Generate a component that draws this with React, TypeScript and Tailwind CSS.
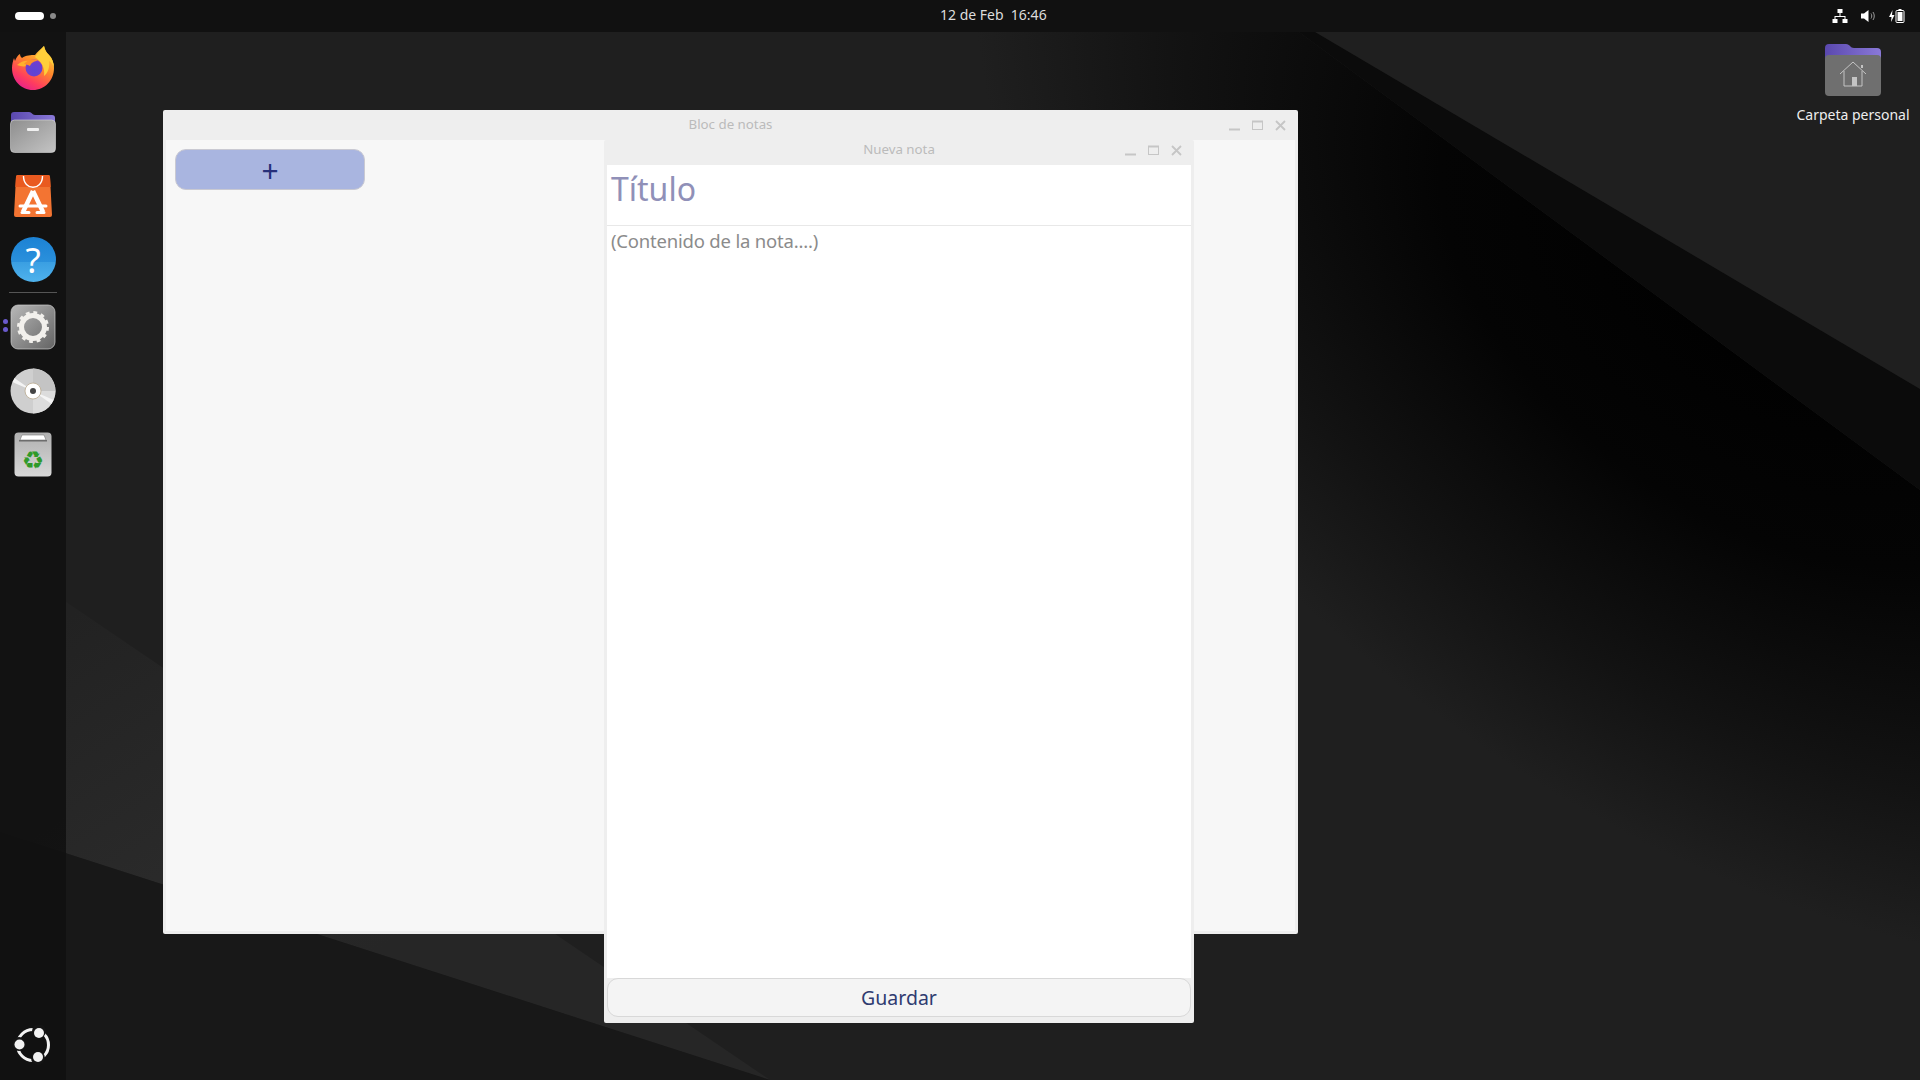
import type { ReactNode } from "react";

const uiFont = "font-['Noto_Sans',sans-serif]";

const Wallpaper = () => (
  <svg className="absolute inset-0" width="1920" height="1080" viewBox="0 0 1920 1080">
    <defs>
      <radialGradient
        id="wedge"
        gradientUnits="userSpaceOnUse"
        cx="0"
        cy="0"
        r="1"
        gradientTransform="translate(1750 300) rotate(36) scale(880 520)"
      >
        <stop offset="0" stopColor="#000" />
        <stop offset="0.4" stopColor="#040404" />
        <stop offset="0.75" stopColor="#131313" />
        <stop offset="1" stopColor="#1f1f1f" />
      </radialGradient>
      <linearGradient id="facet" gradientUnits="userSpaceOnUse" x1="60" y1="620" x2="300" y2="1000">
        <stop offset="0" stopColor="#222222" />
        <stop offset="0.6" stopColor="#2a2a2a" />
        <stop offset="1" stopColor="#262626" />
      </linearGradient>
    </defs>
    <rect width="1920" height="1080" fill="#1f1f1f" />
    <polygon points="1299,32 1920,490 1920,1080 0,1080 0,32" fill="url(#wedge)" />
    <polygon points="1315,32 1920,389 1920,490 1299,32" fill="#0b0b0b" />
    <polygon points="0,557 770,1080 0,832" fill="url(#facet)" />
    <polygon points="0,832 770,1080 0,1080" fill="#181818" />
  </svg>
);

const Firefox = () => (
  <svg width="44" height="46" viewBox="0 0 44 46">
    <defs>
      <linearGradient id="ffBody" x1="0.8" y1="0.05" x2="0.25" y2="1">
        <stop offset="0" stopColor="#ffd33f" />
        <stop offset="0.4" stopColor="#ff8a2b" />
        <stop offset="0.75" stopColor="#ff3d5e" />
        <stop offset="1" stopColor="#e31f8f" />
      </linearGradient>
      <radialGradient id="ffBall" cx="0.55" cy="0.65" r="0.7">
        <stop offset="0" stopColor="#5a45d6" />
        <stop offset="0.7" stopColor="#6e3fd0" />
        <stop offset="1" stopColor="#a13bc4" />
      </radialGradient>
    </defs>
    <path
      d="M33 1c1 4 2 6 5 9 3 3 5 8 5 13 0 12-9 22-21 22S1 35 1 23c0-4 1-7 2-10l1 3c1-3 3-6 5-7 0 2 1 3 2 4 4-3 9-3 13-3 2-3 6-6 9-9z"
      fill="url(#ffBody)"
    />
    <path d="M33 1c1 4 2 6 5 9 3 3 5 8 5 13-1-4-3-6-5-7 1 6-1 12-5 15 1-8-2-14-9-19 2-3 6-7 9-11z" fill="#ffcf3a" />
    <path d="M6 20c4-4 9-5 13-4-2 2-3 3-3 5-4 1-7 0-10-1z" fill="#ffb12e" />
    <circle cx="23" cy="23" r="8.500" fill="url(#ffBall)" />
    <path d="M13 19c3-4 9-6 14-3-4 0-7 2-8 5-2-1-4-2-6-2z" fill="#ff8f2b" />
  </svg>
);

const Files = () => (
  <svg width="46" height="42" viewBox="0 0 46 42">
    <defs>
      <linearGradient id="fileTab" x1="0" y1="0" x2="1" y2="0">
        <stop offset="0" stopColor="#5a48ae" />
        <stop offset="1" stopColor="#8a79d8" />
      </linearGradient>
      <linearGradient id="fileFront" x1="0" y1="0" x2="1" y2="1">
        <stop offset="0" stopColor="#8e8e8e" />
        <stop offset="1" stopColor="#c4c4c4" />
      </linearGradient>
    </defs>
    <path d="M1 4a3 3 0 0 1 3-3h15c3 0 3 3 6 3h17a3 3 0 0 1 3 3v10H1z" fill="url(#fileTab)" />
    <rect x="0.500" y="9" width="45" height="32.500" rx="4" fill="url(#fileFront)" stroke="#d8d8d8" strokeWidth="0.600" />
    <rect x="17" y="17" width="12" height="3" rx="1" fill="#f0f0f0" />
  </svg>
);

const AppCenter = () => (
  <svg width="38" height="44" viewBox="0 0 38 44">
    <path d="M4 1h30a2 2 0 0 1 2 2l2 38a2 2 0 0 1-2 2H2a2 2 0 0 1-2-2L2 3a2 2 0 0 1 2-2z" fill="#f37432" />
    <path d="M4 1h30a2 2 0 0 1 2 2l.700 10H1.300L2 3a2 2 0 0 1 2-2z" fill="#e95a20" />
    <path d="M9.500 2c0 15 19 15 19 0" fill="none" stroke="#fff" strokeWidth="1.400" />
    <path d="M19 17 9 38M19 17l10 21" stroke="#fff" strokeWidth="4.500" fill="none" />
    <path d="M6 32h26M8 38.500h7M23 38.500h7" stroke="#fff" strokeWidth="3" fill="none" strokeLinecap="round" />
  </svg>
);

const Help = () => (
  <div className="mb-[2px] flex size-[45px] items-center justify-center rounded-full bg-[linear-gradient(180deg,#1c82d4_0%,#2a90dc_55%,#3a9fe2_56%,#4fb2ec_100%)] text-[35px] leading-none text-white">
    ?
  </div>
);

const SettingsIcon = () => (
  <svg width="46" height="46" viewBox="0 0 46 46">
    <defs>
      <linearGradient id="setBg" x1="0" y1="0" x2="1" y2="1">
        <stop offset="0" stopColor="#b8b8b8" />
        <stop offset="1" stopColor="#636363" />
      </linearGradient>
    </defs>
    <rect x="1" y="1" width="44" height="44" rx="7" fill="url(#setBg)" stroke="#cfcfcf" strokeWidth="0.700" />
    <circle cx="23" cy="23" r="11.500" fill="none" stroke="#f2f0ec" strokeWidth="5" />
    <circle cx="23" cy="23" r="13.500" fill="none" stroke="#f2f0ec" strokeWidth="5" strokeDasharray="3.530 3.530" />
  </svg>
);

const Disc = () => (
  <svg width="46" height="46" viewBox="0 0 46 46">
    <defs>
      <clipPath id="discClip">
        <circle cx="23" cy="23" r="22.500" />
      </clipPath>
    </defs>
    <g clipPath="url(#discClip)">
      <rect width="46" height="46" fill="#cfcfcf" />
      <rect x="23" width="23" height="23" fill="#c4c4c4" />
      <rect x="23" y="23" width="23" height="23" fill="#dcdcdc" />
      <polygon points="23,23 0,7 0,13" fill="#f4f4f4" />
      <polygon points="23,23 46,33 46,39" fill="#f4f4f4" />
    </g>
    <circle cx="23" cy="23" r="8" fill="#fff" stroke="#b8a88e" strokeWidth="0.800" />
    <circle cx="23" cy="23" r="3" fill="#444" />
  </svg>
);

const Trash = () => (
  <svg width="38" height="46" viewBox="0 0 38 46">
    <defs>
      <linearGradient id="trashBg" x1="0" y1="0" x2="0" y2="1">
        <stop offset="0" stopColor="#b0b0b0" />
        <stop offset="1" stopColor="#d8d8d8" />
      </linearGradient>
    </defs>
    <rect x="0.500" y="0.500" width="37" height="44" rx="4" fill="url(#trashBg)" />
    <path d="M6 8 8 3h22l2 5z" fill="#fff" stroke="#777" strokeWidth="0.600" />
    <rect x="5" y="8" width="28" height="1.500" fill="#6d6d6d" />
    <text x="19" y="37" textAnchor="middle" fontSize="25" fill="#2f9a2a" fontFamily="'DejaVu Sans',sans-serif">
      ♻
    </text>
  </svg>
);

const UbuntuLogo = () => (
  <svg width="40" height="40" viewBox="0 0 40 40">
    <circle cx="20" cy="20" r="15.500" fill="none" stroke="#f2f2f2" strokeWidth="3" />
    <circle cx="26" cy="6" r="7" fill="#141414" />
    <circle cx="6" cy="19" r="7" fill="#141414" />
    <circle cx="25" cy="33" r="7" fill="#141414" />
    <circle cx="26" cy="8" r="5" fill="#f2f2f2" />
    <circle cx="6.500" cy="19.500" r="5" fill="#f2f2f2" />
    <circle cx="25" cy="32" r="5" fill="#f2f2f2" />
  </svg>
);

const DockSlot = ({ children }: { children: ReactNode }) => (
  <div className="relative flex h-[64px] w-full items-center justify-center">{children}</div>
);

const Dock = () => (
  <aside className={`flex w-[66px] shrink-0 flex-col items-center bg-[#111111]/90 pt-[4px] pb-[3px] ${uiFont}`}>
    <DockSlot>
      <Firefox />
    </DockSlot>
    <DockSlot>
      <Files />
    </DockSlot>
    <DockSlot>
      <AppCenter />
    </DockSlot>
    <DockSlot>
      <Help />
    </DockSlot>
    <div className="mb-[2px] h-px w-[48px] bg-[#555555]" />
    <DockSlot>
      <div className="absolute top-[24px] left-[3px] flex flex-col gap-[3px]">
        <span className="size-[5px] rounded-full bg-[#6a5acd]" />
        <span className="size-[5px] rounded-full bg-[#6a5acd]" />
      </div>
      <SettingsIcon />
    </DockSlot>
    <DockSlot>
      <Disc />
    </DockSlot>
    <DockSlot>
      <Trash />
    </DockSlot>
    <div className="mt-auto w-full">
      <DockSlot>
        <UbuntuLogo />
      </DockSlot>
    </div>
  </aside>
);

const TrayIcons = () => (
  <div className="ml-auto flex items-center gap-[12px] pr-[15px]">
    <svg width="16" height="16" viewBox="0 0 16 16" fill="#fff">
      <rect x="5.500" y="1" width="5" height="4" />
      <rect x="0.500" y="11" width="5" height="4" />
      <rect x="10.500" y="11" width="5" height="4" />
      <path d="M7.500 5h1v3H13.500v3h-1V9h-9v2h-1V8h5z" />
    </svg>
    <svg width="16" height="16" viewBox="0 0 16 16">
      <path d="M1 5.500h3L8.500 2v12L4 10.500H1z" fill="#fff" />
      <path d="M11 5.500c1 1.500 1 3.500 0 5M13 4c1.700 2.500 1.700 5.500 0 8" fill="none" stroke="#999" strokeWidth="1" />
    </svg>
    <svg width="17" height="16" viewBox="0 0 17 16">
      <path d="M4.500 2 1 9h2.500L3 14l3.500-7H4z" fill="#fff" />
      <rect x="8" y="2.500" width="8" height="12" rx="1" fill="none" stroke="#fff" strokeWidth="1" />
      <rect x="10.500" y="1" width="3" height="1.500" fill="#fff" />
      <rect x="9.500" y="4" width="5" height="9" fill="#fff" />
    </svg>
  </div>
);

const TopBar = () => (
  <header className={`flex h-8 shrink-0 items-center bg-[#111111] ${uiFont}`}>
    <div className="flex items-center gap-[6px] pl-[15px]">
      <span className="h-[8px] w-[29px] rounded-full bg-white" />
      <span className="size-[6px] rounded-full bg-[#8a8a8a]" />
    </div>
    <div className="mb-[3px] ml-[884px] text-[14px] whitespace-pre text-[#dddddd]">12 de Feb  16:46</div>
    <TrayIcons />
  </header>
);

const WindowControls = () => (
  <div className="flex items-center justify-end gap-3 pr-3">
    <svg width="11" height="11" viewBox="0 0 11 11" stroke="#c6c6c6" fill="none">
      <path d="M0 9.500h11" strokeWidth="2" />
    </svg>
    <svg width="11" height="11" viewBox="0 0 11 11" stroke="#c6c6c6" fill="none">
      <rect x="0.500" y="1.500" width="10" height="8" strokeWidth="1" />
      <path d="M0 1.500h11" strokeWidth="2" />
    </svg>
    <svg width="11" height="11" viewBox="0 0 11 11" stroke="#c6c6c6" fill="none">
      <path d="m1 1 9 9M10 1l-9 9" strokeWidth="1.800" />
    </svg>
  </div>
);

const TitleBar = ({ title, className }: { title: string; className: string }) => (
  <div className={`grid shrink-0 grid-cols-[1fr_auto_1fr] items-center ${className}`}>
    <span />
    <span className="text-[13.300px] text-[#bbbbbb]">{title}</span>
    <WindowControls />
  </div>
);

const NotesWindow = () => (
  <section className={`absolute top-[78px] left-[97px] flex h-[824px] w-[1135px] flex-col rounded-[2px] bg-[#eeeeee] ${uiFont}`}>
    <TitleBar title="Bloc de notas" className="h-[30px]" />
    <div className="mx-[3px] mb-[3px] flex-1 bg-[#f7f7f7] pt-[9px] pl-[9px]">
      <button className="flex h-[41px] w-[190px] items-center justify-center rounded-[11px] border border-[#c9c9d2] bg-[#a9b5e0] pt-[3px] text-[30px] leading-none text-[#27307a]">
        +
      </button>
    </div>
  </section>
);

const NewNoteWindow = () => (
  <section className={`absolute top-[108px] left-[538px] flex h-[883px] w-[590px] flex-col rounded-[2px] bg-[#eeeeee] ${uiFont}`}>
    <TitleBar title="Nueva nota" className="h-[25px] pb-[5px]" />
    <div className="mx-[3px] flex flex-1 flex-col bg-white">
      <div className="h-[61px] border-b border-[#e8e8e8] pt-[2px] pl-[4px] text-[32px] leading-[44px] text-[#9090b8]">Título</div>
      <div className="flex-1 pt-[1px] pl-[4px] text-[18.500px] leading-[28px] tracking-[-0.2px] text-[#8b8b8b]">
        (Contenido de la nota....)
      </div>
    </div>
    <div className="mx-[3px] mb-[6px] shrink-0">
      <button className="flex h-[39px] w-full items-center justify-center rounded-[11px] border border-[#d8d8d8] bg-[#f4f4f4] text-[19.500px] text-[#2f3b70]">
        Guardar
      </button>
    </div>
  </section>
);

const HomeIcon = () => (
  <svg width="56" height="52" viewBox="0 0 56 52">
    <defs>
      <linearGradient id="homeTab" x1="0" y1="0" x2="1" y2="0">
        <stop offset="0" stopColor="#5a48ae" />
        <stop offset="1" stopColor="#8a79d8" />
      </linearGradient>
    </defs>
    <path d="M0 4a4 4 0 0 1 4-4h17c4 0 4 4 8 4h23a4 4 0 0 1 4 4v14H0z" fill="url(#homeTab)" />
    <path d="M0 15a4 4 0 0 1 4-4h48a4 4 0 0 1 4 4v33a4 4 0 0 1-4 4H4a4 4 0 0 1-4-4z" fill="#6f6f6f" />
    <path d="M15 30 28 18l13 12M19 27v15h18V27" fill="none" stroke="#c4c4c4" strokeWidth="1" />
    <rect x="27" y="33" width="5" height="9" fill="#c4c4c4" />
    <rect x="36" y="21" width="2" height="3" fill="#c4c4c4" />
  </svg>
);

const DesktopIcon = () => (
  <div className={`absolute top-[12px] left-[1710px] flex w-[154px] flex-col items-center ${uiFont}`}>
    <HomeIcon />
    <span className="mt-[9px] text-[14px] leading-[20px] text-[#eeeeee]">Carpeta personal</span>
  </div>
);

const App = () => (
  <div className="relative flex h-[1080px] w-[1920px] flex-col overflow-hidden">
    <Wallpaper />
    <div className="relative flex h-full flex-col">
      <TopBar />
      <div className="flex min-h-0 flex-1">
        <Dock />
        <main className="relative flex-1">
          <DesktopIcon />
          <NotesWindow />
          <NewNoteWindow />
        </main>
      </div>
    </div>
  </div>
);

export default App;
